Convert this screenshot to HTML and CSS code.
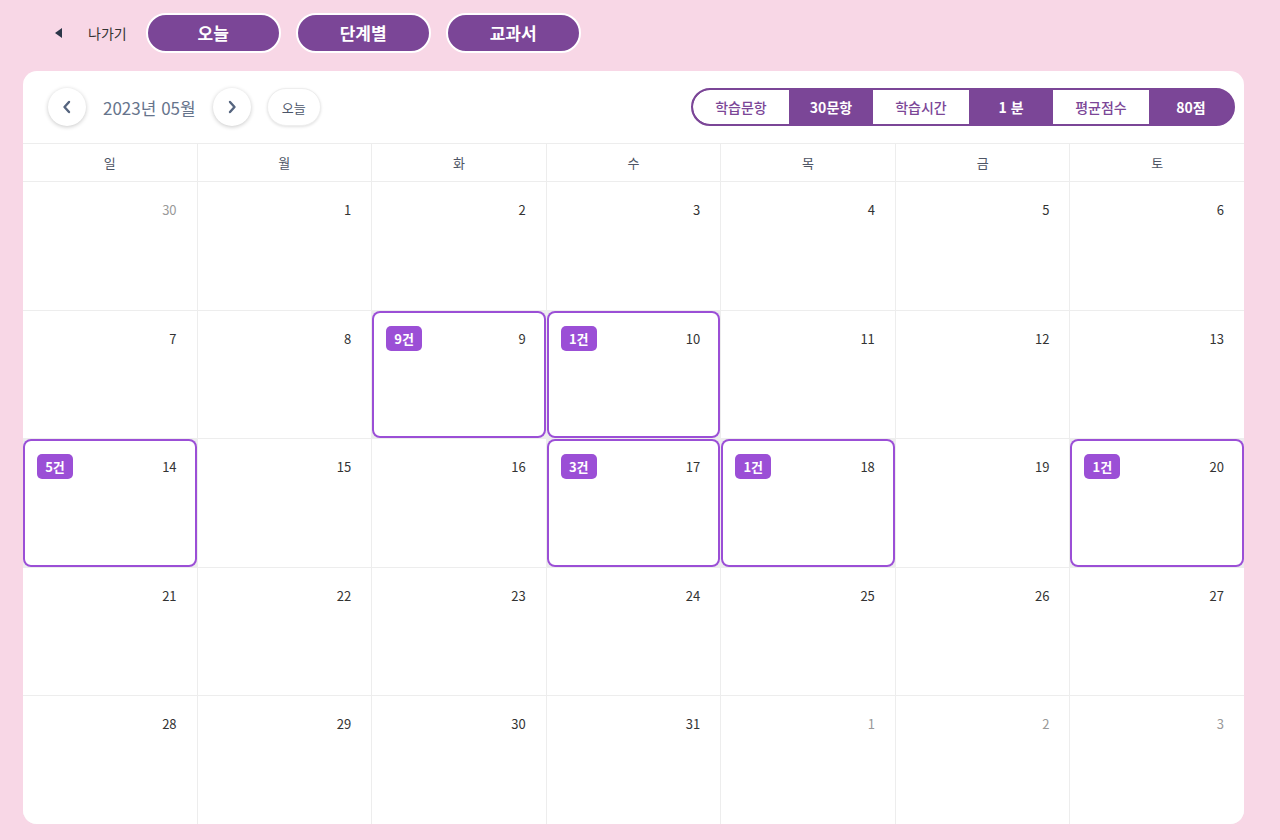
FILE: index.html
```html
<!DOCTYPE html>
<html lang="ko">
<head>
<meta charset="utf-8">
<title>학습 캘린더</title>
<link rel="stylesheet" href="styles.css">
</head>
<body>
<div class="page">
  <div class="topbar">
    <a class="back"><span class="tri"></span><span class="back-label">나가기</span></a>
    <button class="tab">오늘</button>
    <button class="tab">단계별</button>
    <button class="tab">교과서</button>
  </div>
  <div class="card">
    <div class="card-head">
      <div class="nav">
        <button class="circle"><svg width="12" height="14" viewBox="0 0 12 14"><path d="M8 2 L3.5 7 L8 12" fill="none" stroke="#56657f" stroke-width="2.4" stroke-linecap="round" stroke-linejoin="round"/></svg></button>
        <span class="month">2023년 05월</span>
        <button class="circle"><svg width="12" height="14" viewBox="0 0 12 14"><path d="M4 2 L8.5 7 L4 12" fill="none" stroke="#56657f" stroke-width="2.4" stroke-linecap="round" stroke-linejoin="round"/></svg></button>
        <button class="today">오늘</button>
      </div>
      <div class="stats">
        <span class="seg label first">학습문항</span>
        <span class="seg value">30문항</span>
        <span class="seg label">학습시간</span>
        <span class="seg value">1 분</span>
        <span class="seg label">평균점수</span>
        <span class="seg value">80점</span>
      </div>
    </div>
    <div class="grid">
      <div class="wd">일</div><div class="wd">월</div><div class="wd">화</div><div class="wd">수</div><div class="wd">목</div><div class="wd">금</div><div class="wd">토</div>

      <div class="cell"><div class="cell-top"><span class="num other">30</span></div></div>
      <div class="cell"><div class="cell-top"><span class="num">1</span></div></div>
      <div class="cell"><div class="cell-top"><span class="num">2</span></div></div>
      <div class="cell"><div class="cell-top"><span class="num">3</span></div></div>
      <div class="cell"><div class="cell-top"><span class="num">4</span></div></div>
      <div class="cell"><div class="cell-top"><span class="num">5</span></div></div>
      <div class="cell"><div class="cell-top"><span class="num">6</span></div></div>

      <div class="cell"><div class="cell-top"><span class="num">7</span></div></div>
      <div class="cell"><div class="cell-top"><span class="num">8</span></div></div>
      <div class="cell active"><div class="cell-top"><span class="badge">9건</span><span class="num">9</span></div></div>
      <div class="cell active"><div class="cell-top"><span class="badge">1건</span><span class="num">10</span></div></div>
      <div class="cell"><div class="cell-top"><span class="num">11</span></div></div>
      <div class="cell"><div class="cell-top"><span class="num">12</span></div></div>
      <div class="cell"><div class="cell-top"><span class="num">13</span></div></div>

      <div class="cell active"><div class="cell-top"><span class="badge">5건</span><span class="num">14</span></div></div>
      <div class="cell"><div class="cell-top"><span class="num">15</span></div></div>
      <div class="cell"><div class="cell-top"><span class="num">16</span></div></div>
      <div class="cell active"><div class="cell-top"><span class="badge">3건</span><span class="num">17</span></div></div>
      <div class="cell active"><div class="cell-top"><span class="badge">1건</span><span class="num">18</span></div></div>
      <div class="cell"><div class="cell-top"><span class="num">19</span></div></div>
      <div class="cell active"><div class="cell-top"><span class="badge">1건</span><span class="num">20</span></div></div>

      <div class="cell"><div class="cell-top"><span class="num">21</span></div></div>
      <div class="cell"><div class="cell-top"><span class="num">22</span></div></div>
      <div class="cell"><div class="cell-top"><span class="num">23</span></div></div>
      <div class="cell"><div class="cell-top"><span class="num">24</span></div></div>
      <div class="cell"><div class="cell-top"><span class="num">25</span></div></div>
      <div class="cell"><div class="cell-top"><span class="num">26</span></div></div>
      <div class="cell"><div class="cell-top"><span class="num">27</span></div></div>

      <div class="cell"><div class="cell-top"><span class="num">28</span></div></div>
      <div class="cell"><div class="cell-top"><span class="num">29</span></div></div>
      <div class="cell"><div class="cell-top"><span class="num">30</span></div></div>
      <div class="cell"><div class="cell-top"><span class="num">31</span></div></div>
      <div class="cell"><div class="cell-top"><span class="num other">1</span></div></div>
      <div class="cell"><div class="cell-top"><span class="num other">2</span></div></div>
      <div class="cell"><div class="cell-top"><span class="num other">3</span></div></div>
    </div>
  </div>
</div>
</body>
</html>
```
FILE: styles.css
```css
* { box-sizing: border-box; }
html, body {
  margin: 0;
  padding: 0;
  background: #f8d7e6;
  font-family: "Noto Sans CJK KR", "Noto Sans", sans-serif;
}
.page {
  width: 1280px;
  height: 840px;
  padding: 13px 36px 0 23px;
}
button {
  font-family: inherit;
  cursor: pointer;
}
.topbar {
  display: flex;
  align-items: center;
  height: 39px;
  margin-bottom: 19px;
}
.back {
  display: flex;
  align-items: center;
  margin-left: 32px;
  margin-right: 19px;
}
.tri {
  width: 0;
  height: 0;
  border-top: 5px solid transparent;
  border-bottom: 5px solid transparent;
  border-right: 7px solid #2b3648;
  margin-right: 26px;
}
.back-label {
  font-size: 14px;
  color: #333;
}
.tab {
  width: 135px;
  height: 40px;
  margin-right: 15px;
  border: 2px solid #fff;
  border-radius: 20px;
  background: #7b4697;
  color: #fff;
  font-size: 17px;
  font-weight: 700;
  padding: 0;
}
.card {
  background: #fff;
  border-radius: 14px;
  height: 753px;
  overflow: hidden;
  display: flex;
  flex-direction: column;
}
.card-head {
  height: 72px;
  flex: none;
  display: flex;
  align-items: center;
  justify-content: space-between;
  padding: 0 9px 0 25px;
}
.nav {
  display: flex;
  align-items: center;
}
.circle {
  width: 38px;
  height: 38px;
  border-radius: 50%;
  border: none;
  background: #fff;
  box-shadow: 0 1px 4px rgba(0,0,0,0.22);
  display: flex;
  align-items: center;
  justify-content: center;
  padding: 0;
}
.month {
  font-size: 17px;
  color: #66748c;
  margin: 0 17px;
}
.today {
  margin-left: 16px;
  width: 54px;
  height: 38px;
  border-radius: 19px;
  border: 1px solid #eee;
  background: #fff;
  box-shadow: 0 1px 3px rgba(0,0,0,0.12);
  font-size: 13px;
  color: #4b5568;
  padding: 0;
}
.stats {
  display: flex;
  height: 38px;
  border: 2px solid #7b4697;
  border-radius: 19px;
  background: #7b4697;
  overflow: hidden;
}
.seg {
  display: flex;
  align-items: center;
  justify-content: center;
  font-size: 14px;
}
.seg.label {
  width: 96px;
  background: #fff;
  color: #7b4697;
  font-weight: 500;
}
.seg.label.first {
  border-radius: 17px 0 0 17px;
}
.seg.value {
  width: 84px;
  color: #fff;
  font-weight: 700;
}
.grid {
  flex: 1;
  display: grid;
  grid-template-columns: repeat(7, 1fr);
  grid-template-rows: 37px repeat(5, 1fr);
  gap: 1px;
  background: #ededed;
  border-top: 1px solid #ededed;
}
.wd {
  background: #fff;
  display: flex;
  align-items: center;
  justify-content: center;
  font-size: 13px;
  color: #4e5565;
}
.cell {
  background: #fff;
  padding: 14px 20px 0 14px;
}
.cell.active {
  border-radius: 8px;
  box-shadow: inset 0 0 0 2px #9b4fd6;
}
.cell-top {
  display: flex;
  align-items: center;
  justify-content: space-between;
  height: 27px;
}
.num {
  margin-left: auto;
  font-size: 13px;
  color: #333;
}
.num.other {
  color: #999;
}
.badge {
  display: inline-flex;
  align-items: center;
  justify-content: center;
  width: 36px;
  height: 25px;
  border-radius: 5px;
  background: #9b4fd6;
  color: #fff;
  font-size: 13px;
  font-weight: 700;
}
```
